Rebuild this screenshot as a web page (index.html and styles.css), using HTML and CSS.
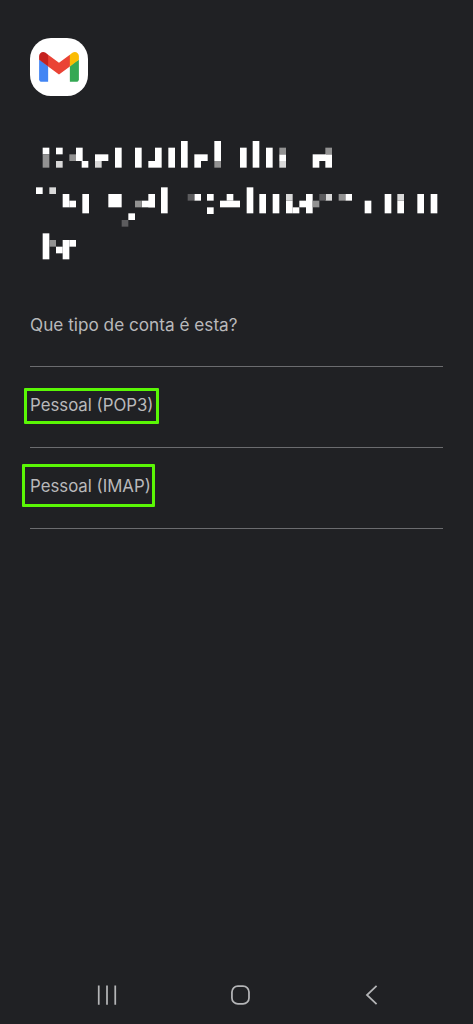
FILE: index.html
```html
<!DOCTYPE html>
<html lang="pt">
<head>
<meta charset="utf-8">
<title>Gmail</title>
<link rel="stylesheet" href="styles.css">
</head>
<body>
<main class="screen">
  <div class="app-icon">
    <svg class="gmail" viewBox="0 0 256 193" aria-hidden="true">
      <path fill="#4285F4" d="M58.182 192.05V93.14L27.507 65.077 0 49.504v125.091c0 9.658 7.825 17.455 17.455 17.455h40.727Z"/>
      <path fill="#34A853" d="M197.818 192.05h40.727c9.659 0 17.455-7.826 17.455-17.455V49.505l-31.156 17.837-27.026 25.798v98.91Z"/>
      <path fill="#EA4335" d="m58.182 93.14-4.174-38.647 4.174-36.989L128 69.868l69.818-52.364 4.669 34.992-4.669 40.644L128 145.504z"/>
      <path fill="#FBBC04" d="M197.818 17.504V93.14L256 49.504V26.231c0-21.585-24.64-33.89-41.89-20.945l-16.292 12.218Z"/>
      <path fill="#C5221F" d="M0 49.504l26.759 20.07L58.182 93.14V17.504L41.89 5.286C24.61-7.66 0 4.646 0 26.23v23.273Z"/>
    </svg>
  </div>

  <svg class="mosaic" viewBox="0 0 1320 390" aria-hidden="true">
    <g class="w">
      <rect x="68" y="38" width="20" height="20"/>
      <rect x="108" y="38" width="20" height="20"/>
      <rect x="168" y="38" width="20" height="40"/>
      <rect x="185" y="78" width="20" height="20"/>
      <rect x="225" y="58" width="40" height="20"/>
      <rect x="285" y="38" width="20" height="60"/>
      <rect x="345" y="38" width="20" height="60"/>
      <rect x="385" y="78" width="20" height="20"/>
      <rect x="405" y="38" width="20" height="60"/>
      <rect x="445" y="38" width="20" height="60"/>
      <rect x="483" y="18" width="20" height="80"/>
      <rect x="523" y="58" width="40" height="20"/>
      <rect x="523" y="78" width="20" height="20"/>
      <rect x="583" y="18" width="20" height="60"/>
      <rect x="660" y="38" width="20" height="60"/>
      <rect x="698" y="18" width="20" height="80"/>
      <rect x="738" y="38" width="20" height="60"/>
      <rect x="778" y="58" width="20" height="20"/>
      <rect x="878" y="58" width="40" height="20"/>
      <rect x="878" y="78" width="20" height="20"/>
      <rect x="916" y="58" width="20" height="40"/>
      <rect x="48" y="157" width="20" height="20"/>
      <rect x="128" y="177" width="20" height="40"/>
      <rect x="148" y="197" width="20" height="20"/>
      <rect x="187" y="177" width="20" height="58"/>
      <rect x="265" y="177" width="40" height="40"/>
      <rect x="365" y="197" width="40" height="20"/>
      <rect x="385" y="177" width="20" height="40"/>
      <rect x="325" y="235" width="20" height="20"/>
      <rect x="423" y="157" width="20" height="78"/>
      <rect x="523" y="177" width="20" height="20"/>
      <rect x="561" y="177" width="20" height="20"/>
      <rect x="561" y="217" width="20" height="20"/>
      <rect x="620" y="177" width="20" height="20"/>
      <rect x="600" y="197" width="60" height="20"/>
      <rect x="680" y="157" width="20" height="78"/>
      <rect x="718" y="177" width="20" height="58"/>
      <rect x="758" y="177" width="20" height="58"/>
      <rect x="798" y="197" width="20" height="38"/>
      <rect x="818" y="217" width="20" height="18"/>
      <rect x="838" y="197" width="20" height="20"/>
      <rect x="858" y="177" width="20" height="58"/>
      <rect x="976" y="177" width="20" height="20"/>
      <rect x="1034" y="197" width="20" height="38"/>
      <rect x="1094" y="177" width="20" height="58"/>
      <rect x="1132" y="197" width="20" height="38"/>
      <rect x="1192" y="177" width="20" height="58"/>
      <rect x="1232" y="177" width="20" height="58"/>
      <rect x="68" y="295" width="20" height="78"/>
      <rect x="108" y="335" width="20" height="20"/>
      <rect x="128" y="315" width="20" height="58"/>
      <rect x="148" y="315" width="20" height="20"/>
    </g>
    <g class="light">
      <rect x="108" y="78" width="20" height="20"/>
      <rect x="225" y="78" width="20" height="20"/>
      <rect x="778" y="78" width="20" height="20"/>
      <rect x="88" y="157" width="20" height="20"/>
      <rect x="798" y="177" width="20" height="20"/>
      <rect x="916" y="177" width="20" height="20"/>
      <rect x="1132" y="177" width="20" height="20"/>
    </g>
    <g class="mid">
      <rect x="68" y="58" width="20" height="40"/>
      <rect x="148" y="58" width="20" height="20"/>
      <rect x="583" y="78" width="20" height="20"/>
      <rect x="778" y="38" width="20" height="20"/>
      <rect x="916" y="38" width="20" height="20"/>
      <rect x="345" y="197" width="20" height="20"/>
      <rect x="878" y="197" width="20" height="20"/>
      <rect x="956" y="177" width="20" height="20"/>
      <rect x="88" y="315" width="20" height="20"/>
    </g>
    <g class="dim">
      <rect x="305" y="255" width="20" height="20"/>
      <rect x="503" y="177" width="20" height="20"/>
      <rect x="898" y="177" width="20" height="20"/>
    </g>
  </svg>

  <p class="question">Que tipo de conta é esta?</p>
  <div class="options">
    <div class="option"><span class="label">Pessoal (POP3)<i class="mark mark-pop"></i></span></div>
    <div class="option"><span class="label">Pessoal (IMAP)<i class="mark mark-imap"></i></span></div>
  </div>
</main>

<nav class="navbar">
  <svg class="nav-icon" viewBox="0 0 24 24" aria-hidden="true">
    <path d="M3 1.5v21M12 1.5v21M21 1.5v21"/>
  </svg>
  <svg class="nav-icon" viewBox="0 0 24 24" aria-hidden="true">
    <rect x="3.2" y="2.2" width="18.6" height="19.6" rx="6.5"/>
  </svg>
  <svg class="nav-icon" viewBox="0 0 24 24" aria-hidden="true">
    <path d="M17 2 6.5 12 17 22"/>
  </svg>
</nav>
</body>
</html>
```

FILE: styles.css
```css
* { box-sizing: border-box; }

html, body { margin: 0; padding: 0; }

body {
  width: 473px;
  height: 1024px;
  background: #202124;
  font-family: Inter, Roboto, "Liberation Sans", sans-serif;
  display: flex;
  flex-direction: column;
  overflow: hidden;
}

.screen {
  flex: 1;
  padding: 38px 30px 0;
}

.app-icon {
  width: 58px;
  height: 58px;
  background: #fff;
  border-radius: 21px;
  display: flex;
  align-items: center;
  justify-content: center;
}

.gmail { width: 40px; height: 30px; }

.mosaic {
  display: block;
  width: 440px;
  height: 130px;
  margin: 39px 0 0 -10px;
  filter: blur(0.4px);
}

.w { fill: #fff; }
.light { fill: #d8d8d8; }
.mid { fill: #929292; }
.dim { fill: #5c5c5e; }

.question {
  margin: 48px 0 0;
  font-size: 17.2px;
  line-height: 24px;
  color: #b9b9bb;
}

.options {
  margin-top: 29px;
  border-top: 1px solid #6b6c6f;
}

.option {
  height: 81px;
  padding-top: 26px;
  border-bottom: 1px solid #6b6c6f;
}

.label {
  position: relative;
  display: inline-block;
  font-size: 16.8px;
  line-height: 24px;
  color: #b9b9bb;
}

.mark {
  position: absolute;
  border: 3px solid #5af705;
  border-radius: 1px;
}

.mark-pop { left: -6px; top: -5px; width: 135px; height: 36px; }
.mark-imap { left: -8px; top: -10px; width: 133px; height: 43px; }

.navbar {
  height: 56px;
  padding: 0 90px 2px 96px;
  display: flex;
  align-items: center;
  justify-content: space-between;
}

.nav-icon {
  width: 22px;
  height: 22px;
  fill: none;
  stroke: #b4b5b7;
  stroke-width: 1.9;
}
```
